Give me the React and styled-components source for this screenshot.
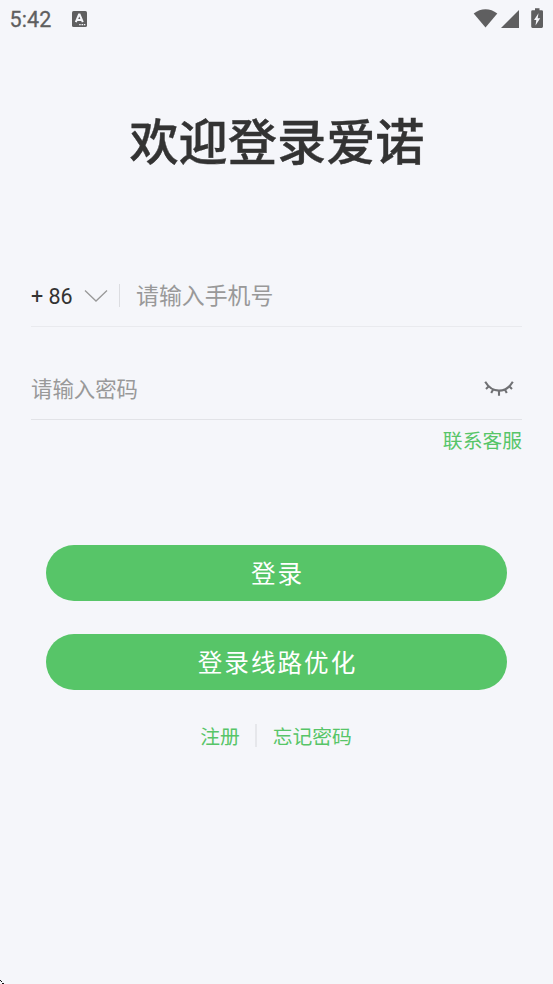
import React from "react";
import styled, { createGlobalStyle } from "styled-components";

const GlobalStyle = createGlobalStyle`
  * { box-sizing: border-box; }
  body {
    margin: 0;
    background: #f5f6fa;
    font-family: Roboto, "Noto Sans CJK SC", sans-serif;
  }
`;

const Screen = styled.main`
  position: relative;
  display: flex;
  flex-direction: column;
  width: 553px;
  height: 984px;
  overflow: hidden;
  background: #f5f6fa;
`;

const StatusBar = styled.header`
  display: flex;
  align-items: center;
  height: 37px;
  padding: 0 9px 0 9.5px;
  color: #5f5f60;
`;

const Clock = styled.span`
  width: 62px;
  padding-top: 2px;
  font-size: 21.5px;
  line-height: 26px;
  font-weight: 400;
  letter-spacing: 0.1px;
  -webkit-text-stroke: 0.3px #5f5f60;
`;

const StatusIcons = styled.div`
  display: flex;
  align-items: center;
  margin-left: auto;
  padding-bottom: 1px;
`;

const Title = styled.h1`
  margin: 68px 0 0 1px;
  height: 76px;
  line-height: 76px;
  text-align: center;
  font-size: 49.2px;
  font-weight: 500;
  color: #333;
  -webkit-text-stroke: 0.4px #333;
`;

const Form = styled.section`
  margin: 85px 31px 0;
`;

const Field = styled.div`
  display: flex;
  align-items: center;
  height: ${(p) => p.$height}px;
  padding-top: ${(p) => p.$top || 0}px;
  border-bottom: 1px solid ${(p) => p.$line};
`;

const Code = styled.span`
  width: 53px;
  padding-top: 1px;
  font-size: 21.5px;
  line-height: 26px;
  color: #333;
`;

const Divider = styled.i`
  width: ${(p) => p.$width || 1}px;
  height: 23px;
  margin: ${(p) => p.$margin};
  background: ${(p) => p.$color};
`;

const Placeholder = styled.span`
  flex: 1;
  padding-top: ${(p) => p.$top || 0}px;
  font-size: ${(p) => p.$size}px;
  line-height: 32px;
  color: #999;
`;

const Link = styled.a`
  display: block;
  font-size: 19.8px;
  line-height: 30px;
  color: #57c568;
`;

const SupportRow = styled.div`
  display: flex;
  justify-content: flex-end;
  margin-top: 7px;
`;

const Actions = styled.section`
  display: flex;
  flex-direction: column;
  gap: 33px;
  margin: 88px 46px 0;
`;

const Button = styled.button`
  height: 56px;
  padding: 3px 0 0 2px;
  border: 0;
  border-radius: 28px;
  background: #57c568;
  color: #fff;
  font: 400 24.6px/53px Roboto, "Noto Sans CJK SC", sans-serif;
  letter-spacing: 2px;
`;

const FooterLinks = styled.nav`
  display: flex;
  justify-content: center;
  align-items: flex-start;
  margin: 33px 1px 0 0;
`;

const Corner = styled.svg`
  position: absolute;
  left: 0;
  bottom: 0;
`;

export default function App() {
  return (
    <Screen>
      <GlobalStyle />
      <StatusBar>
        <Clock>5:42</Clock>
        <svg width="15" height="16" viewBox="0 0 15 16">
          <rect width="15" height="16" rx="1.6" fill="#5f5f60" />
          <path d="M3.8 11.2 7 3.6H7.6L10.8 11.2M5 8.9H9.6" fill="none" stroke="#f5f6fa" strokeWidth="2" />
          <path d="M7.2 13.6h1.5M9.5 13.6h1.5M11.8 13.6h1.5" stroke="#f5f6fa" strokeWidth="1.3" />
        </svg>
        <StatusIcons>
          <svg width="71" height="22" viewBox="0 0 71 22" fill="#5f5f60">
            <path d="M0.7 6.4C7.8.7 17.2.7 24.3 6.4L12.5 20.4Z" />
            <path d="M46 3V21H28Z" />
            <path d="M62 1.3h4.5v2h2.2q1.3 0 1.3 1.3v14.9q0 1.4-1.3 1.4h-9.2q-1.3 0-1.3-1.4V4.6q0-1.3 1.3-1.3H62Z" />
            <path d="M65.5 6.3 61 13h2.3l-.8 5.5 4.7-7.2h-2.5Z" fill="#f5f6fa" />
          </svg>
        </StatusIcons>
      </StatusBar>

      <Title>欢迎登录爱诺</Title>

      <Form>
        <Field $height={61} $line="#e9eaee">
          <Code>+ 86</Code>
          <svg width="24" height="14" viewBox="0 0 24 14">
            <path d="M1 1.5 12 12 23 1.5" fill="none" stroke="#999" strokeWidth="1.3" />
          </svg>
          <Divider $margin="0 16px 2px 11px" $color="#dcdde1" />
          <Placeholder $size={22.9} $top={2}>请输入手机号</Placeholder>
        </Field>
        <Field $height={93} $top={32} $line="#e2e3e7">
          <Placeholder $size={21.4} $top={2}>请输入密码</Placeholder>
          <svg width="38" height="18" viewBox="0 0 38 18" fill="none" stroke="#707174" strokeWidth="2.1">
            <path d="M1.2 1.8C8.2 13.6 21.8 13.6 28.8 1.8" />
            <path d="M4.8 6.2 2 8.9M9.3 9.3 7.2 13M15 10.6V15.7M20.7 9.3l2.1 3.7M25.2 6.2l2.8 2.7" />
          </svg>
        </Field>
        <SupportRow><Link>联系客服</Link></SupportRow>
      </Form>

      <Actions>
        <Button>登录</Button>
        <Button>登录线路优化</Button>
      </Actions>

      <FooterLinks>
        <Link>注册</Link>
        <Divider $width={2} $margin="1px 16px 0 15px" $color="#e6e7eb" />
        <Link>忘记密码</Link>
      </FooterLinks>

      <Corner width="4" height="4" viewBox="0 0 4 4" shapeRendering="crispEdges">
        <path d="M0 0h1v1H0zM1 1h1v1H1zM2 3h2v1H2z" fill="#111" />
      </Corner>
    </Screen>
  );
}
